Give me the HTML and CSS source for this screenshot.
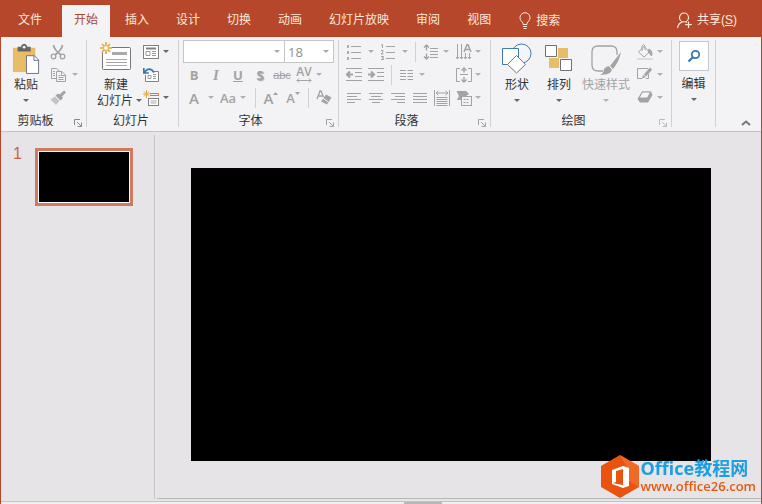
FILE: index.html
```html
<!DOCTYPE html>
<html lang="zh-CN">
  <head>
    <meta charset="UTF-8" />
    <meta name="viewport" content="width=device-width, initial-scale=1.0" />
    <title>PowerPoint</title>
    <link rel="stylesheet" href="styles.css">
  </head>
  <body>
    <div class="window">
      <header class="titlebar">
        <nav class="tabs">
          <button class="tab tab-file">文件</button>
          <button class="tab active">开始</button>
          <button class="tab">插入</button>
          <button class="tab">设计</button>
          <button class="tab">切换</button>
          <button class="tab">动画</button>
          <button class="tab">幻灯片放映</button>
          <button class="tab">审阅</button>
          <button class="tab">视图</button>
        </nav>
        <button class="search">
          <svg width="12" height="18" viewBox="0 0 12 18" fill="none" stroke="currentColor">
            <path d="M4 12.500V11C3 9.500 1 8.500 1 5.700A5 5 0 0 1 11 5.700C11 8.500 9 9.500 8 11V12.500ZM4 14.500H8M4.500 16.500H7.500" />
          </svg>
          搜索
        </button>
        <button class="share">
          <svg width="15" height="17" viewBox="0 0 15 17" fill="none" stroke="currentColor" stroke-width="1.200">
            <circle cx="7" cy="5.500" r="4.500" />
            <path d="M.6 16C1 12.500 3 10.500 5.500 9.800M8.500 9.800L10 10.500M11.500 9.500V16M8.200 12.700H14.800" />
          </svg>
          <span>共享(<u>S</u>)</span>
        </button>
      </header>

      <div class="ribbon">
        <!-- Clipboard -->
        <section class="group group-clipboard">
          <div class="group-body">
            <button class="big">
              <svg width="28" height="34" viewBox="0 0 30 34">
                <path d="M1 5H25V31H1Z" fill="#e8bd68" />
                <path d="M6 4H10V2.500Q13 -1 16 2.500V4H20V9H6Z" fill="#666" />
                <circle cx="13" cy="4.300" r="1.500" fill="#f3f2f4" />
                <path d="M15.500 13.500H24L28.500 18V32.500H15.500Z" fill="#fff" stroke="#64707c" />
                <path d="M23.500 13.500V18.500H28.500" fill="none" stroke="#64707c" />
              </svg>
              <span class="big-text">粘贴</span>
              <span class="caret"></span>
            </button>
            <div class="rows muted">
              <div class="row">
                <button class="tool" aria-label="剪切" disabled>
                  <svg width="16" height="16" viewBox="0 0 16 16" fill="none" stroke="currentColor" stroke-width="1.300">
                    <path d="M3.500 1C4 5 7 8 11 11M12.500 1C12 5 9 8 5 11" stroke-width="1.800" />
                    <circle cx="3.500" cy="12.500" r="2.300" />
                    <circle cx="12.500" cy="12.500" r="2.300" />
                  </svg>
                </button>
              </div>
              <div class="row">
                <button class="tool" aria-label="复制" disabled>
                  <svg width="16" height="16" viewBox="0 0 16 16" fill="none" stroke="currentColor">
                    <path d="M6 11.500H1.500V1.500H6.500L9.500 4" />
                    <path d="M3 4.500H5M3 6.500H5M3 8.500H5" />
                    <path d="M6.500 4.500H12L15.500 8V14.500H6.500ZM11.500 4.500V8.500H15M8.500 8.500H10.500M8.500 10.500H13.500M8.500 12.500H13.500" />
                  </svg>
                </button>
                <span class="caret"></span>
              </div>
              <div class="row">
                <button class="tool" aria-label="格式刷" disabled>
                  <svg width="16" height="16" viewBox="0 0 16 16" fill="currentColor">
                    <path d="M14 .5L16 2.500L12 6.500L13 8L10.500 10.500L5.500 5.500L8 3.500L9.500 4.500Z" />
                    <path d="M5 6.500L9.500 11L6 15L.5 9.500Z" opacity=".6" />
                  </svg>
                </button>
              </div>
            </div>
          </div>
          <footer class="group-label"><span>剪贴板</span>
            <svg class="launcher" width="8" height="8" viewBox="0 0 8 8" fill="none" stroke="currentColor"><path d="M.5 6V.5H6M3 3L7 7M7.500 3.500V7.500H3.500" /></svg>
          </footer>
        </section>

        <!-- Slides -->
        <section class="group group-slides">
          <div class="group-body">
            <button class="big">
              <svg width="32" height="34" viewBox="0 0 32 34" fill="none">
                <rect x="2.500" y="5.500" width="28" height="22" rx="1" fill="#fff" stroke="#777" />
                <path d="M12 11.500H27" stroke="#aaa" stroke-width="3" />
                <path d="M6 17.500H27M6 20.500H27M6 23.500H27" stroke="#aaa" />
                <circle cx="6" cy="6" r="5.500" fill="#f3f2f4" />
                <path d="M6 0V12M0 6H12M2 2L10 10M10 2L2 10" stroke="#e6a93e" stroke-width="1.600" />
                <circle cx="6" cy="6" r="2.500" fill="#fff" stroke="#e6a93e" />
              </svg>
              <span class="big-text">新建</span>
              <span class="big-line">幻灯片<span class="caret"></span></span>
            </button>
            <div class="rows">
              <div class="row">
                <button class="tool" aria-label="版式">
                  <svg width="16" height="16" viewBox="0 0 16 16" fill="none" stroke="#808080">
                    <rect x=".5" y="1.500" width="15" height="13" fill="#fff" />
                    <path d="M3 4.500H13" stroke-width="2" /><path d="M3 7.500H7V11.500H3ZM9 7.500H13M9 9.500H13M9 11.500H13" stroke="#999" />
                  </svg>
                </button>
                <span class="caret tight"></span>
              </div>
              <div class="row">
                <button class="tool" aria-label="重置">
                  <svg width="16" height="16" viewBox="0 0 16 16" fill="none" stroke="#808080">
                    <path d="M11 4.500H15.500V14.500H2.500V8" fill="#fff" />
                    <path d="M5 8.500H8V11.500H5ZM10 7.500H13M10 9.500H13M10 11.500H13" stroke="#999" />
                    <path d="M1.500 5.500C4 1 8.500 1 11 5.500M.8 1V6H5.800" stroke="#3777ad" stroke-width="1.700" />
                  </svg>
                </button>
              </div>
              <div class="row">
                <button class="tool" aria-label="节">
                  <svg width="16" height="16" viewBox="0 0 16 16" fill="none">
                    <path d="M3.500 0V8M-.5 4H7.500M1 1.500L6 6.500M6 1.500L1 6.500" stroke="#e6a93e" />
                    <path d="M7 3.500H15.500V5.500H7" stroke="#d8733c" />
                    <rect x="5.500" y="8.500" width="10" height="7" fill="#fff" stroke="#808080" />
                    <path d="M7.500 11H13.500M7.500 13H13.500" stroke="#aaa" />
                  </svg>
                </button>
                <span class="caret tight"></span>
              </div>
            </div>
          </div>
          <footer class="group-label"><span>幻灯片</span></footer>
        </section>

        <!-- Font -->
        <section class="group group-font muted">
          <div class="group-body">
            <div class="rows">
              <div class="row">
                <div class="combo combo-name"><select aria-label="字体" disabled><option></option></select></div>
                <div class="combo combo-size"><select aria-label="字号" disabled><option>18</option></select></div>
              </div>
              <div class="row">
                <button class="tool bold" disabled>B</button>
                <button class="tool italic" disabled>I</button>
                <button class="tool underline" disabled>U</button>
                <button class="tool shadow" disabled>S</button>
                <button class="tool strike" disabled>abc</button>
                <button class="tool spacing" disabled>AV
                  <svg width="16" height="5" viewBox="0 0 16 5" fill="none" stroke="currentColor"><path d="M1 2.500H15M3 .5L1 2.500L3 4.500M13 .5L15 2.500L13 4.500" /></svg>
                </button>
                <span class="caret tight"></span>
              </div>
              <div class="row">
                <button class="tool letter" disabled>A</button>
                <span class="caret"></span>
                <button class="tool case" disabled>Aa</button>
                <span class="caret tight"></span>
                <span class="sep wide"></span>
                <button class="tool grow" disabled>A<svg width="5" height="12" viewBox="0 0 5 12" fill="currentColor"><path d="M0 3L2.500 0L5 3Z" /></svg></button>
                <button class="tool shrink" disabled>A<svg width="5" height="12" viewBox="0 0 5 12" fill="currentColor"><path d="M0 0L2.500 3L5 0Z" /></svg></button>
                <span class="sep"></span>
                <button class="tool" aria-label="清除格式" disabled>
                  <svg width="16" height="16" viewBox="0 0 16 16" fill="none" stroke="currentColor" stroke-width="1.300">
                    <path d="M1 9L4 1H5L7.500 7M2.500 6H6.500" />
                    <path d="M10 4.500L15.500 7.500L11 14.500L5 11.500Z" fill="currentColor" stroke="none" />
                    <path d="M7 8.500L12.500 12" stroke="#f3f2f4" stroke-width="1" />
                  </svg>
                </button>
              </div>
            </div>
          </div>
          <footer class="group-label"><span>字体</span>
            <svg class="launcher" width="8" height="8" viewBox="0 0 8 8" fill="none" stroke="currentColor"><path d="M.5 6V.5H6M3 3L7 7M7.500 3.500V7.500H3.500" /></svg>
          </footer>
        </section>

        <!-- Paragraph -->
        <section class="group group-paragraph muted">
          <div class="group-body">
            <div class="rows">
              <div class="row">
                <button class="tool" aria-label="项目符号" disabled>
                  <svg width="16" height="16" viewBox="0 0 16 16" fill="none" stroke="currentColor"><path d="M5 2.500H15M5 8.500H15M5 14.500H15" /><path d="M1 2.500H3M1 8.500H3M1 14.500H3" stroke-width="2.500" /></svg>
                </button>
                <span class="caret"></span>
                <button class="tool" aria-label="编号" disabled>
                  <svg width="16" height="16" viewBox="0 0 16 16" fill="none" stroke="currentColor"><path d="M6 2.500H15M6 8.500H15M6 14.500H15" /><path d="M1 1L2.500 .5V4M1 6.500H3V8L1 10H3.500M1 12.500H3.500L2 14H3.500V15.500H1" /></svg>
                </button>
                <span class="caret"></span>
                <span class="sep"></span>
                <button class="tool" aria-label="行距" disabled>
                  <svg width="16" height="16" viewBox="0 0 16 16" fill="none" stroke="currentColor"><path d="M7 4.500H15M7 7.500H15M7 10.500H15M7 13.500H15" /><path d="M3.500 1V6.500M1 3.500L3.500 1L6 3.500M3.500 9.500V15M1 12.500L3.500 15L6 12.500" stroke-width="1.400" /></svg>
                </button>
                <span class="caret tight"></span>
                <span class="push"></span>
                <button class="tool snug" aria-label="文字方向" disabled>
                  <svg width="16" height="16" viewBox="0 0 16 16" fill="none" stroke="currentColor"><path d="M1.500 0V15M5.500 0V15M9.500 9V15M13.500 9V15M0 13L1.500 15L3 13M4 13L5.500 15L7 13M8 13L9.500 15L11 13M12 13L13.500 15L15 13" /><path d="M8 8L11 .8H12L15 8M9.500 5.500H13.500" stroke-width="1.500" /></svg>
                </button>
                <span class="caret"></span>
              </div>
              <div class="row">
                <button class="tool" aria-label="减少缩进" disabled>
                  <svg width="16" height="16" viewBox="0 0 16 16" fill="none" stroke="currentColor"><path d="M0 1.500H16M9 5.500H16M9 9.500H16M0 13.500H16" /><path d="M1 7.500H7M4 4.500L1 7.500L4 10.500" stroke-width="2" /></svg>
                </button>
                <button class="tool" aria-label="增加缩进" disabled>
                  <svg width="16" height="16" viewBox="0 0 16 16" fill="none" stroke="currentColor"><path d="M0 1.500H16M9 5.500H16M9 9.500H16M0 13.500H16" /><path d="M0 7.500H6M3 4.500L6 7.500L3 10.500" stroke-width="2" /></svg>
                </button>
                <span class="sep"></span>
                <button class="tool" aria-label="分栏" disabled>
                  <svg width="16" height="16" viewBox="0 0 16 16" fill="none" stroke="currentColor"><path d="M1 3.500H7M1 6.500H7M1 9.500H7M1 12.500H7M8.500 3.500H14M8.500 6.500H14M8.500 9.500H14M8.500 12.500H14" /></svg>
                </button>
                <span class="caret tight"></span>
                <span class="push"></span>
                <button class="tool snug" aria-label="对齐文本" disabled>
                  <svg width="16" height="16" viewBox="0 0 16 16" fill="none" stroke="currentColor"><path d="M4 1.500H.5V14.500H4M12 1.500H15.500V14.500H12M4 7.500H12" /><path d="M8 1V5.500M5.500 3.500L8 1L10.500 3.500M8 10V15M5.500 12.500L8 15L10.500 12.500" stroke-width="1.400" /></svg>
                </button>
                <span class="caret"></span>
              </div>
              <div class="row">
                <button class="tool" aria-label="左对齐" disabled>
                  <svg width="16" height="16" viewBox="0 0 16 16" stroke="currentColor"><path d="M1 3.500H15M1 6.500H11M1 9.500H15M1 12.500H9" /></svg>
                </button>
                <button class="tool" aria-label="居中" disabled>
                  <svg width="16" height="16" viewBox="0 0 16 16" stroke="currentColor"><path d="M1 3.500H15M3 6.500H13M1 9.500H15M4 12.500H12" /></svg>
                </button>
                <button class="tool" aria-label="右对齐" disabled>
                  <svg width="16" height="16" viewBox="0 0 16 16" stroke="currentColor"><path d="M1 3.500H15M5 6.500H15M1 9.500H15M7 12.500H15" /></svg>
                </button>
                <button class="tool" aria-label="两端对齐" disabled>
                  <svg width="16" height="16" viewBox="0 0 16 16" stroke="currentColor"><path d="M1 3.500H15M1 6.500H15M1 9.500H15M1 12.500H15" /></svg>
                </button>
                <button class="tool" aria-label="分散对齐" disabled>
                  <svg width="16" height="16" viewBox="0 0 16 16" fill="none" stroke="currentColor"><path d="M.5 0V16M15.500 0V16M2 3H14M4.500 .8L2 3L4.500 5.200M11.500 .8L14 3L11.500 5.200M2.500 7.500H13.500M2.500 9.500H13.500M2.500 11.500H13.500M2.500 13.500H13.500M2.500 15.500H13.500" /></svg>
                </button>
                <span class="push"></span>
                <button class="tool snug" aria-label="转换为 SmartArt" disabled>
                  <svg width="16" height="16" viewBox="0 0 16 16" fill="none" stroke="currentColor"><path d="M.5 1H10L13 4L10 6H5V10H1L3 6Z" fill="currentColor" stroke="none" /><rect x="5.500" y="6.500" width="10" height="9" fill="#f3f2f4" /><path d="M7.500 9.500H13.500M7.500 12.500H13.500" stroke-dasharray="2 1" /></svg>
                </button>
                <span class="caret"></span>
              </div>
            </div>
          </div>
          <footer class="group-label"><span>段落</span>
            <svg class="launcher" width="8" height="8" viewBox="0 0 8 8" fill="none" stroke="currentColor"><path d="M.5 6V.5H6M3 3L7 7M7.500 3.500V7.500H3.500" /></svg>
          </footer>
        </section>

        <!-- Drawing -->
        <section class="group group-drawing">
          <div class="group-body">
            <button class="big">
              <svg width="30" height="34" viewBox="0 0 30 34" fill="#fff" stroke="#3f79b0">
                <circle cx="19.500" cy="11.500" r="9.500" fill="#f6f6f8" />
                <path d="M.5 6.500H16.500V22.500H.5Z" />
                <path d="M14.500 13.500L23.500 22.500L14.500 31L5.500 22.500Z" stroke="#777" />
              </svg>
              <span class="big-text">形状</span>
              <span class="caret"></span>
            </button>
            <button class="big">
              <svg width="28" height="34" viewBox="0 0 28 34" fill="#fff" stroke="#707070">
                <path d="M13 6H23V16H13ZM4 16H14V26H4Z" fill="#e8bd68" stroke="none" />
                <path d="M.5 3.500H11.500V14.500H.5ZM15.500 17.500H26.500V28.500H15.500Z" />
              </svg>
              <span class="big-text">排列</span>
              <span class="caret"></span>
            </button>
            <button class="big big-wide muted" disabled>
              <svg width="30" height="34" viewBox="0 0 30 34" fill="none" stroke="currentColor">
                <path d="M12 29H7Q1 29 1 23V10Q1 4 7 4H20Q26 4 26 10V13" stroke-width="1.300" />
                <path d="M30 10L19 24L22 27Q28 20 30 10Z" fill="currentColor" stroke="none" />
                <path d="M18 24Q22 26 20 30Q17 33 9 33Q13 31 13 27Q15 24 18 24Z" fill="currentColor" stroke="none" />
                <path d="M17 23L22 28" stroke="#f3f2f4" />
              </svg>
              <span class="big-text">快速样式</span>
              <span class="caret"></span>
            </button>
            <div class="rows muted">
              <div class="row">
                <button class="tool" aria-label="形状填充" disabled>
                  <svg width="16" height="16" viewBox="0 0 16 16" fill="none" stroke="currentColor"><path d="M7 2.500L12.500 8L7 13L1.500 8ZM5 7V2Q6.500 -1 8 2V6" /><path d="M12 5Q16 7 14.500 12Q13 9 11 8Z" fill="currentColor" /><path d="M0 15H16" stroke="#ddd" stroke-width="2" /></svg>
                </button>
                <span class="caret tight"></span>
              </div>
              <div class="row">
                <button class="tool" aria-label="形状轮廓" disabled>
                  <svg width="16" height="16" viewBox="0 0 16 16" fill="none" stroke="currentColor"><path d="M11 1.500H.5V11.500H5M11.500 7V11.500H9" /><path d="M14 1.500L8 8.500" stroke-width="3" /><path d="M6 8L9 10L5 11.500Z" fill="currentColor" stroke="none" /></svg>
                </button>
                <span class="caret tight"></span>
              </div>
              <div class="row">
                <button class="tool" aria-label="形状效果" disabled>
                  <svg width="16" height="16" viewBox="0 0 16 16"><path d="M5 1.500H14L15.500 5L11 12.500H3L.5 9Z" fill="currentColor" /><path d="M5.500 2H13.500L10.500 8H2Z" fill="#f6f6f8" stroke="currentColor" /></svg>
                </button>
                <span class="caret tight"></span>
              </div>
            </div>
          </div>
          <footer class="group-label"><span>绘图</span>
            <svg class="launcher muted" width="8" height="8" viewBox="0 0 8 8" fill="none" stroke="currentColor"><path d="M.5 6V.5H6M3 3L7 7M7.500 3.500V7.500H3.500" /></svg>
          </footer>
        </section>

        <!-- Editing -->
        <section class="group group-edit">
          <div class="group-body">
            <button class="big">
              <span class="find">
                <svg width="14" height="14" viewBox="0 0 14 14" fill="none" stroke="#3b75b3" stroke-width="1.800"><circle cx="8.500" cy="5.500" r="3.700" /><path d="M5.800 8.200L1.500 12.500" stroke-width="2.200" /></svg>
              </span>
              <span class="big-text">编辑</span>
              <span class="caret"></span>
            </button>
          </div>
        </section>

        <button class="collapse" aria-label="折叠功能区">
          <svg width="10" height="6" viewBox="0 0 10 6" fill="none" stroke="#777" stroke-width="2"><path d="M1 5L5 1.500L9 5" /></svg>
        </button>
      </div>

      <main class="workspace">
        <aside class="slides-pane">
          <span class="slide-number">1</span>
          <button class="thumb" aria-label="幻灯片 1"></button>
        </aside>
        <div class="canvas">
          <div class="slide"></div>
        </div>
      </main>
      <div class="notes"><span class="notes-handle"></span></div>
    </div>

    <div class="brand">
      <svg width="40" height="44" viewBox="0 0 40 44">
        <path d="M20 0L39 11V32L20 43L1 32V11Z" fill="#e9520f" />
        <path d="M20 0L39 11V32L27 25V13Z" fill="#f47b32" opacity=".6" />
        <path d="M12 15L23 11L29 13V31L23 33L12 29V28L23 30V14L16 16V27L12 28.500Z" fill="#fff" />
      </svg>
      <div class="brand-text">
        <div class="brand-name">Office教程网</div>
        <a class="brand-url" href="#">www.office26.com</a>
      </div>
    </div>
  </body>
</html>
```

FILE: styles.css
```css
:root {
  --accent: #b7472a;
  --ribbon-bg: #f3f2f4;
  --workspace-bg: #e6e4e6;
  --line: #c6c4c6;
  --text: #333333;
  --muted: #a3a3a3;
}

* {
  box-sizing: border-box;
  margin: 0;
  padding: 0;
}

body {
  font-family: "Liberation Sans", "Noto Sans CJK SC", sans-serif;
  font-size: 12px;
  line-height: 16px;
  color: var(--text);
}

button {
  border: none;
  background: none;
  font: inherit;
  color: inherit;
}

svg {
  display: block;
  flex: none;
}

.window {
  display: flex;
  flex-direction: column;
  min-height: 100vh;
  border: solid var(--accent);
  border-width: 0 1px;
  background-color: var(--workspace-bg);
}

/* Title bar */
.titlebar {
  display: flex;
  height: 37px;
  padding-top: 5px;
  background-color: var(--accent);
  color: #fbe9dc;
}

.tabs {
  display: flex;
  gap: 3px;
}

.tab {
  padding: 0 12px 2px;
  white-space: nowrap;
}

.tab-file {
  padding: 0 17px 2px;
}

.tab.active {
  background-color: var(--ribbon-bg);
  color: #a4492f;
}

.search,
.share {
  display: flex;
  align-items: center;
  gap: 5px;
  white-space: nowrap;
}

.search {
  margin-left: 16px;
}

.share {
  margin-left: auto;
  margin-right: 24px;
  padding-bottom: 2px;
}

/* Ribbon */
.ribbon {
  display: flex;
  padding: 3px 0 4px;
  background-color: var(--ribbon-bg);
  border-bottom: 1px solid var(--line);
}

.group {
  display: flex;
  flex-direction: column;
  flex: none;
  border-right: 1px solid #d2d0d2;
}

.group-clipboard {
  width: 86px;
  padding-left: 4px;
}

.group-slides {
  width: 92px;
  padding-left: 5px;
}

.group-font {
  width: 160px;
  padding-left: 4px;
}

.group-paragraph {
  width: 152px;
  padding-left: 4px;
}

.group-drawing {
  width: 181px;
  padding-left: 5px;
}

.group-edit {
  width: 44px;
}

.group-body {
  display: flex;
  height: 73px;
}

.group-label {
  display: flex;
  align-items: center;
  height: 14px;
  padding-right: 4px;
  color: var(--text);
}

.group-label span {
  flex: 1;
  padding: 2px 8px 0 0;
  text-align: center;
}

.group-slides .group-label span {
  padding-right: 4px;
}

.launcher {
  align-self: flex-end;
  color: #888888;
}

.muted,
.muted .launcher {
  color: var(--muted);
}

.launcher.muted {
  color: #bbbbbb;
}

.big {
  display: flex;
  flex-direction: column;
  align-items: center;
  width: 42px;
  padding-top: 2px;
  white-space: nowrap;
}

.big-wide {
  width: 52px;
}

.group-drawing .rows {
  padding-left: 2px;
}

.group-slides .big {
  width: 48px;
}

.big > svg {
  margin-bottom: 1px;
}

.big-line {
  display: flex;
  margin-right: -10px;
}

.big .caret {
  height: 14px;
}

.find {
  display: flex;
  align-items: center;
  justify-content: center;
  width: 30px;
  height: 30px;
  margin-bottom: 5px;
  border: 1px solid #c3c9d2;
  background-color: #ffffff;
}

.group-edit .big {
  width: 100%;
  padding-top: 1px;
}

.rows {
  flex: 1;
}

.row {
  display: flex;
  align-items: center;
  height: 23px;
}

.tool {
  display: flex;
  align-items: center;
  justify-content: center;
  flex: none;
  width: 22px;
  height: 22px;
}

.tool.snug {
  width: 16px;
}

.push {
  flex: 1;
}

.group-paragraph .row {
  padding-right: 6px;
}

/* small drop-down triangle */
.caret {
  display: flex;
  align-items: center;
  justify-content: center;
  flex: none;
  width: 12px;
}

.caret::before {
  content: "";
  border: 3px solid transparent;
  border-top-color: #666666;
  border-bottom: none;
}

.muted .caret::before {
  border-top-color: #b0b0b0;
}

.caret.tight {
  width: 8px;
}

.sep {
  width: 1px;
  height: 20px;
  margin: 0 4px;
  background-color: #d2d0d2;
}

.sep.wide {
  margin-left: 8px;
}

/* Font controls */
.combo {
  position: relative;
  height: 23px;
}

.combo-name {
  width: 102px;
}

.combo-size {
  width: 49px;
}

.combo select {
  appearance: none;
  width: 100%;
  height: 100%;
  padding: 0 4px;
  border: 1px solid #c6c6c6;
  border-radius: 0;
  background-color: #ffffff;
  font: 13px "Open Sans", sans-serif;
  color: #909090;
  opacity: 1;
}

.combo-size select {
  padding-left: 3px;
  border-left: none;
}

.combo::after {
  content: "";
  position: absolute;
  top: 10px;
  right: 5px;
  border: 3px solid transparent;
  border-top-color: #a8a8a8;
  border-bottom: none;
}

.bold,
.italic,
.underline,
.shadow,
.letter,
.case,
.grow,
.shrink,
.spacing {
  font-family: "Open Sans", sans-serif;
  font-size: 13px;
  font-weight: 600;
}

.bold,
.underline,
.shadow {
  font-weight: 700;
}

.italic {
  font-family: "Liberation Serif", serif;
  font-size: 15px;
  font-style: italic;
}

.underline {
  text-decoration: underline;
}

.shadow {
  text-shadow: 1px 1px 1px #a3a3a3;
}

.strike {
  font-size: 11px;
  text-decoration: line-through;
}

.spacing {
  flex-direction: column;
  font-size: 12px;
  line-height: 12px;
}

.letter,
.grow {
  font-size: 15px;
}

/* Bottom-right corner button */
.collapse {
  align-self: flex-end;
  margin-left: auto;
  padding: 0 10px 1px;
}

/* Workspace */
.workspace {
  display: flex;
  flex: 1;
  padding-top: 3px;
}

.slides-pane {
  display: flex;
  align-items: flex-start;
  gap: 13px;
  width: 154px;
  padding: 13px 0 0 12px;
  border-right: 1px solid var(--line);
}

.slide-number {
  width: 9px;
  font-size: 16px;
  line-height: 12px;
  color: #c2634b;
}

.thumb {
  width: 98px;
  height: 58px;
  border: 3px solid #d17a62;
  outline: 1px solid #ffffff;
  outline-offset: -4px;
  background-color: #000000;
}

.canvas {
  flex: 1;
  margin-left: 2px;
  padding: 33px 50px 37px 34px;
  border-bottom: 1px solid #b9b7b9;
}

.slide {
  aspect-ratio: 520 / 293;
  background-color: #000000;
}

.notes {
  height: 4px;
  margin-top: 2px;
  border-top: 1px solid var(--line);
  background-color: #f0eff0;
}

.notes-handle {
  display: block;
  width: 38px;
  height: 3px;
  margin-left: 53%;
  background-color: #b8b8b8;
}

/* Site badge over the bottom-right corner */
.brand {
  position: fixed;
  right: 6px;
  bottom: 5px;
  display: flex;
  align-items: center;
  gap: 1px;
}

.brand-text {
  font-family: "Open Sans", "Noto Sans CJK SC", sans-serif;
  font-weight: 600;
}

.brand-name {
  font-size: 18px;
  font-weight: 700;
  line-height: 18px;
  color: #1c9ee0;
}

.brand-url {
  display: block;
  font-size: 13px;
  line-height: 18px;
  color: #e8590f;
  text-decoration: none;
}
```
